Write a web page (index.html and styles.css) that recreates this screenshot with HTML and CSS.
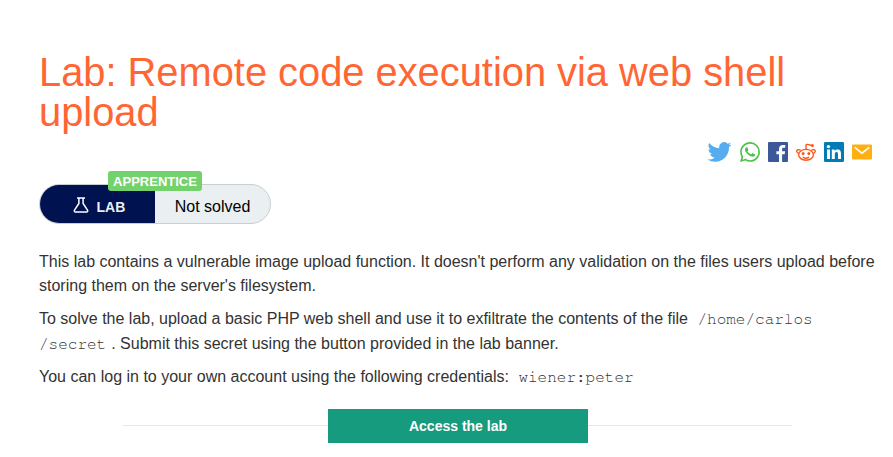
FILE: index.html
```html
<!DOCTYPE html>
<html lang="en">
<head>
<meta charset="utf-8">
<title>Lab: Remote code execution via web shell upload</title>
<link rel="stylesheet" href="styles.css">
</head>
<body>
<main class="lab">
  <h1 class="title">Lab: Remote code execution via web shell upload</h1>
  <div class="share">
    <svg class="twitter" viewBox="0 0 24 20" aria-label="Twitter"><path fill="#55acee" d="M24 2.400a9.800 9.800 0 0 1-2.800.8A5 5 0 0 0 23.300.500a9.900 9.900 0 0 1-3.100 1.200 4.920 4.920 0 0 0-8.400 4.500A14 14 0 0 1 1.700 1a4.930 4.930 0 0 0 1.500 6.600A4.900 4.900 0 0 1 1 7v.1a4.930 4.930 0 0 0 3.900 4.800 5 5 0 0 1-2.200.1 4.940 4.940 0 0 0 4.600 3.400A9.900 9.900 0 0 1 0 17.500a14 14 0 0 0 7.500 2.200c9.100 0 14-7.500 14-14v-.7A10 10 0 0 0 24 2.400z"/></svg>
    <svg class="whatsapp" viewBox="0 0 24 24" aria-label="WhatsApp"><path fill="#4dc247" d="M17.472 14.382c-.297-.149-1.758-.867-2.030-.967-.273-.099-.471-.148-.670.150-.197.297-.767.966-.940 1.164-.173.199-.347.223-.644.075-.297-.150-1.255-.463-2.390-1.475-.883-.788-1.480-1.761-1.653-2.059-.173-.297-.018-.458.130-.606.134-.133.298-.347.446-.520.149-.174.198-.298.298-.497.099-.198.050-.371-.025-.520-.075-.149-.669-1.612-.916-2.207-.242-.579-.487-.500-.669-.510-.173-.008-.371-.010-.570-.010-.198 0-.520.074-.792.372-.272.297-1.040 1.016-1.040 2.479 0 1.462 1.065 2.875 1.213 3.074.149.198 2.096 3.200 5.077 4.487.709.306 1.262.489 1.694.625.712.227 1.360.195 1.871.118.571-.085 1.758-.719 2.006-1.413.248-.694.248-1.289.173-1.413-.074-.124-.272-.198-.570-.347m-5.421 7.403h-.004a9.870 9.870 0 0 1-5.031-1.378l-.361-.214-3.741.982.998-3.648-.235-.374a9.860 9.860 0 0 1-1.510-5.260c.001-5.450 4.436-9.884 9.888-9.884a9.880 9.880 0 0 1 9.884 9.892c-.003 5.450-4.437 9.884-9.888 9.884m8.413-18.297A11.820 11.820 0 0 0 12.050 0C5.495 0 .160 5.335.157 11.892c0 2.096.547 4.142 1.588 5.945L.057 24l6.305-1.654a11.880 11.880 0 0 0 5.683 1.448h.005c6.554 0 11.890-5.335 11.893-11.893a11.820 11.820 0 0 0-3.480-8.413z"/></svg>
    <svg viewBox="0 0 20 20" aria-label="Facebook"><rect width="20" height="20" rx="1" fill="#3b5998"/><path fill="#fff" d="M11 20v-7.700H8.400v-3H11V7c0-2.600 1.600-4 3.900-4 1.100 0 2.100.1 2.300.1v2.700h-1.600c-1.200 0-1.500.6-1.500 1.500v2h3l-.4 3h-2.600V20z"/></svg>
    <svg viewBox="0 0 20 20" aria-label="Reddit"><g fill="none" stroke="#ff5718" stroke-width="1.400"><ellipse cx="10" cy="12.800" rx="7.400" ry="5.400"/><path d="M10 7.400V3.600c0-.9.500-1.300 1.300-1.200l3.700.8M3 11.600C.2 10.700.1 8.200 2 7.700c1-.2 1.800 0 2.600.7M17 11.600c2.800-.9 2.900-3.400 1-3.900-1-.2-1.800 0-2.600.7M6.900 15.100c1.700 1.200 4.500 1.200 6.200 0"/></g><g fill="#ff5718"><circle cx="16.300" cy="3.400" r="1.500"/><circle cx="7.100" cy="11.500" r="1.500"/><circle cx="12.900" cy="11.500" r="1.500"/></g></svg>
    <svg viewBox="0 0 20 20" aria-label="LinkedIn"><rect width="20" height="20" rx="1.200" fill="#007bb6"/><path fill="#fff" d="M3 7.600h3V17H3zM7.800 7.600h2.800v1.300c.5-.9 1.500-1.500 2.800-1.500 3 0 3.600 1.900 3.600 4.500V17h-3v-4.500c0-1.100 0-2.500-1.500-2.500s-1.700 1.200-1.700 2.400V17h-3z"/><circle cx="4.500" cy="4.600" r="1.700" fill="#fff"/></svg>
    <svg viewBox="0 0 20 20" aria-label="Email"><rect y="2.500" width="20" height="15" rx="1.200" fill="#ffaf12"/><path fill="none" stroke="#fff" stroke-width="1.600" d="M2.700 5.400L10 11.200l7.300-5.800"/></svg>
  </div>
  <div class="status">
    <span class="level">APPRENTICE</span>
    <div class="pill">
      <div class="kind"><svg viewBox="0 0 16 16" aria-hidden="true"><path d="M4 1h8M5.900 1v5.500L1.500 13.200c-.6 1 0 1.800 1 1.800h11c1 0 1.600-.8 1-1.800L10.100 6.500V1"/></svg><span>LAB</span></div>
      <div class="state">Not solved</div>
    </div>
  </div>
  <div class="description">
    <p>This lab contains a vulnerable image upload function. It doesn't perform any validation on the files users upload before storing them on the server's filesystem.</p>
    <p class="task">To solve the lab, upload a basic PHP web shell and use it to exfiltrate the contents of the file <code>/home/carlos<br>/secret</code>. Submit this secret using the button provided in the lab banner.</p>
    <p>You can log in to your own account using the following credentials: <code>wiener:peter</code></p>
  </div>
  <div class="access"><a class="button">Access the lab</a></div>
</main>
</body>
</html>
```
FILE: styles.css
```css
* { box-sizing: border-box; }
body {
  margin: 0;
  background: #fff;
  color: #333332;
  font: 16px/24px "Liberation Sans", Arial, sans-serif;
}
.lab { width: 837px; margin-left: 39px; padding-top: 52px; }
.title { margin: 0; color: #ff6633; font-size: 39.84px; line-height: 40px; font-weight: 400; }
.share { display: flex; justify-content: flex-end; align-items: center; gap: 8px; height: 24px; margin-top: 8px; padding-right: 4px; }
.share svg { display: block; width: 20px; height: 20px; }
.share .twitter { width: 25px; }
.status { position: relative; width: 232px; margin-top: 20px; }
.pill { display: flex; height: 40px; border: 1px solid #c8cfd1; border-radius: 20px; overflow: hidden; background: #eaeff2; }
.kind { display: flex; align-items: center; width: 115px; padding: 6px 0 0 33px; gap: 7.500px; background: #00124f; color: #eaeff2; font-size: 14px; font-weight: 700; }
.kind svg { width: 16px; height: 16px; margin-top: -5px; fill: none; stroke: #fff; stroke-width: 1.500; }
.state { flex: 1; padding-top: 10px; text-align: center; color: #000; }
.level { position: absolute; z-index: 1; left: 69px; top: -13px; width: 94px; height: 20px; border-radius: 3px; background: #73d26c; color: #fff; text-align: center; font-size: 13px; line-height: 21px; font-weight: 700; }
.description { margin-top: 26px; }
.description p { margin: 0 0 8px; }
.description .task { margin-bottom: 9px; line-height: 25px; }
code { padding: 0 5px; color: #333332; font: 16px/16px "Nimbus Mono PS", FreeMono, "Liberation Mono", monospace; }
.access { display: flex; width: 669px; margin: 20px 84px 0; }
.access::before, .access::after { content: ""; flex: 1; height: 1px; margin-top: 16px; background: #e6e6e6; }
.button { width: 260px; height: 34px; background: #179b7f; color: #fff; padding-left: 1px; text-align: center; font-size: 14px; line-height: 34px; font-weight: 700; }
```
